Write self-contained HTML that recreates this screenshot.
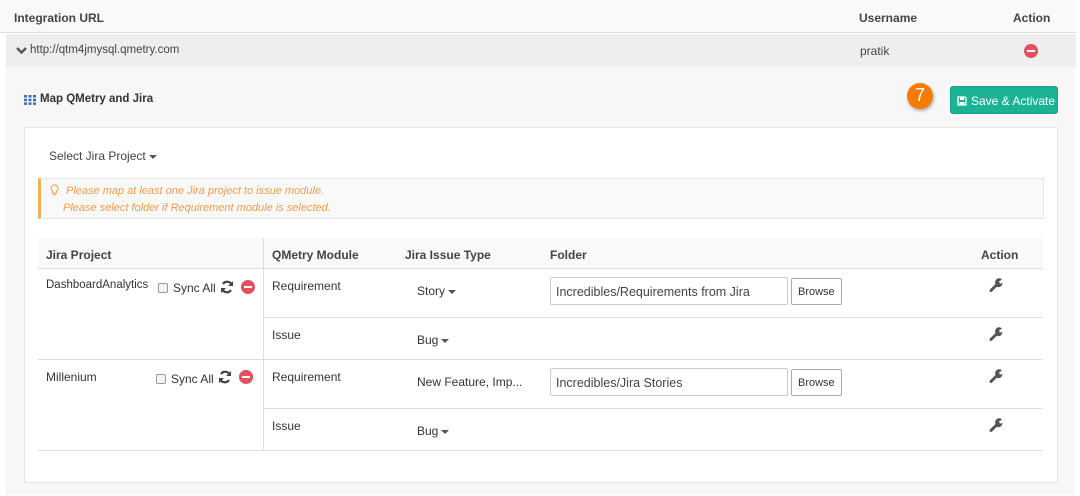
<!DOCTYPE html>
<html><head><style>
*{box-sizing:border-box;margin:0;padding:0}
body{width:1080px;height:496px;background:#fff;font-family:"Liberation Sans",sans-serif;font-size:12px;color:#333;position:relative;overflow:hidden}
.a{position:absolute;white-space:nowrap}
.b{font-weight:bold;color:#444}
.hl{position:absolute;height:1px;background:#ddd}
.inp{position:absolute;border:1px solid #ccc;border-radius:2px;background:#fff;height:28px;padding:7px 5px;font-size:12.5px;color:#444}
.btn{position:absolute;border:1px solid #aaa;border-radius:2px;background:#fff;height:27px;padding:7px 6px;font-size:11px;color:#333}
.caret{display:inline-block;border-left:4px solid transparent;border-right:4px solid transparent;border-top:4px solid #555;vertical-align:middle;margin-left:3px}
.cb{display:inline-block;width:10px;height:10px;border:1px solid #999;border-radius:2px;background:#f4f4f4;vertical-align:-1px;margin-right:5px}
.minus{position:absolute;width:14px;height:14px;border-radius:50%;background:#e4505d}
.minus:after{content:"";position:absolute;left:3px;top:6px;width:8px;height:2px;background:#fff}
</style></head><body>
<div class="a" style="left:0;top:0;width:1076px;height:33px;background:#f9f9f9;border-bottom:1px solid #ddd"></div>
<div class="a b" style="left:14px;top:11px">Integration URL</div>
<div class="a b" style="left:859px;top:11px">Username</div>
<div class="a b" style="left:1013px;top:11px">Action</div>
<div class="a" style="left:6px;top:34px;width:1070px;height:33px;background:#eee"></div>
<div class="a" style="left:16px;top:44px"><svg width="11" height="9" viewBox="0 0 11 9"><path d="M1 2 L5.5 6.5 L10 2" stroke="#555" stroke-width="2.4" fill="none"/></svg></div>
<div class="a" style="left:30px;top:44px;color:#444;font-size:11.5px">http://qtm4jmysql.qmetry.com</div>
<div class="a" style="left:860px;top:44px;color:#444">pratik</div>
<div class="minus" style="left:1024px;top:44px"></div>
<div class="a" style="left:6px;top:67px;width:1069px;height:428px;background:#f7f7f7"></div>
<div class="a" style="left:24px;top:94px"><svg width="12" height="10" viewBox="0 0 12 10"><g fill="#3a6fb0"><rect x="0" y="0" width="3" height="2.5"/><rect x="4.5" y="0" width="3" height="2.5"/><rect x="9" y="0" width="3" height="2.5"/><rect x="0" y="3.7" width="3" height="2.5"/><rect x="4.5" y="3.7" width="3" height="2.5"/><rect x="9" y="3.7" width="3" height="2.5"/><rect x="0" y="7.4" width="3" height="2.5"/><rect x="4.5" y="7.4" width="3" height="2.5"/><rect x="9" y="7.4" width="3" height="2.5"/></g></svg></div>
<div class="a b" style="left:40px;top:93px;color:#333;font-size:11.5px">Map QMetry and Jira</div>
<div class="a" style="left:907px;top:83px;width:26px;height:26px;border-radius:50%;background:#f57c00;box-shadow:1px 2px 3px rgba(0,0,0,.3);color:#fff;font-size:18px;text-align:center;line-height:25px">7</div>
<div class="a" style="left:950px;top:86px;width:108px;height:28px;background:#1cb394;border:1px solid #17a085;border-radius:3px;color:#fff;font-size:12px;padding:7px 0 0 6px"><svg width="10" height="10" viewBox="0 0 10 10" style="vertical-align:-1px;margin-right:4px"><path d="M1 1h7l1 1v7H1z" fill="none" stroke="#fff" stroke-width="1.3"/><rect x="3" y="1" width="4" height="3" fill="#fff"/><rect x="2.5" y="6" width="5" height="3" fill="#fff"/></svg>Save &amp; Activate</div>
<div class="a" style="left:24px;top:127px;width:1034px;height:356px;background:#fff;border:1px solid #e3e3e3"></div>
<div class="a" style="left:49px;top:149px;color:#444">Select Jira Project<span class="caret"></span></div>
<div class="a" style="left:38px;top:178px;width:1006px;height:41px;background:#f9f9f9;border:1px solid #e6e6e6;border-left:3px solid #f6ad5a"></div>
<div class="a" style="left:50px;top:184px"><svg width="9" height="12" viewBox="0 0 9 12"><path d="M4.5 1a3.3 3.3 0 0 0-2 6v2h4V7a3.3 3.3 0 0 0-2-6zM3 10.5h3" fill="none" stroke="#f6a04d" stroke-width="1"/></svg></div>
<div class="a" style="left:66px;top:185px;color:#f49a4b;font-style:italic;font-size:11px">Please map at least one Jira project to issue module.</div>
<div class="a" style="left:63px;top:202px;color:#f49a4b;font-style:italic;font-size:11px">Please select folder if Requirement module is selected.</div>
<div class="a" style="left:38px;top:238px;width:1005px;height:30px;background:#f9f9f9"></div>
<div class="a" style="left:263px;top:238px;width:1px;height:212px;background:#ddd"></div>
<div class="hl" style="left:38px;top:268px;width:1005px"></div>
<div class="hl" style="left:264px;top:317px;width:779px"></div>
<div class="hl" style="left:38px;top:359px;width:1005px"></div>
<div class="hl" style="left:264px;top:408px;width:779px"></div>
<div class="hl" style="left:38px;top:450px;width:1005px"></div>
<div class="a b" style="left:46px;top:248px">Jira Project</div>
<div class="a b" style="left:272px;top:248px">QMetry Module</div>
<div class="a b" style="left:405px;top:248px">Jira Issue Type</div>
<div class="a b" style="left:550px;top:248px">Folder</div>
<div class="a b" style="left:981px;top:248px">Action</div>
<div class="a" style="left:46px;top:279px;font-size:11.5px">DashboardAnalytics</div>
<div class="a" style="left:158px;top:281px"><span class="cb"></span>Sync All</div>
<svg class="a" style="left:220px;top:280px" width="14" height="14" viewBox="0 0 14 14"><path d="M12 5.5A5 5 0 0 0 3 4M2 8.5A5 5 0 0 0 11 10" fill="none" stroke="#444" stroke-width="2.2"/><path d="M13 1v5h-5zM1 13V8h5z" fill="#444"/></svg>
<div class="minus" style="left:241px;top:280px"></div>
<div class="a" style="left:272px;top:279px">Requirement</div>
<div class="a" style="left:417px;top:284px">Story<span class="caret"></span></div>
<div class="inp" style="left:550px;top:277px;width:238px">Incredibles/Requirements from Jira</div>
<div class="btn" style="left:791px;top:278px">Browse</div>
<div class="a" style="left:272px;top:328px">Issue</div>
<div class="a" style="left:417px;top:333px">Bug<span class="caret"></span></div>
<div class="a" style="left:46px;top:370px">Millenium</div>
<div class="a" style="left:156px;top:372px"><span class="cb"></span>Sync All</div>
<svg class="a" style="left:218px;top:370px" width="14" height="14" viewBox="0 0 14 14"><path d="M12 5.5A5 5 0 0 0 3 4M2 8.5A5 5 0 0 0 11 10" fill="none" stroke="#444" stroke-width="2.2"/><path d="M13 1v5h-5zM1 13V8h5z" fill="#444"/></svg>
<div class="minus" style="left:239px;top:370px"></div>
<div class="a" style="left:272px;top:370px">Requirement</div>
<div class="a" style="left:417px;top:375px">New Feature, Imp...</div>
<div class="inp" style="left:550px;top:368px;width:238px">Incredibles/Jira Stories</div>
<div class="btn" style="left:791px;top:369px">Browse</div>
<div class="a" style="left:272px;top:419px">Issue</div>
<div class="a" style="left:417px;top:424px">Bug<span class="caret"></span></div>
<svg class="a" style="left:989px;top:278px" width="14" height="14" viewBox="0 0 14 14"><path d="M2 12.5 L8 6.5" stroke="#555" stroke-width="3" stroke-linecap="round"/><path d="M6.5 6a4 4 0 0 1 6.5-4.5l-3 2 1 2.2 2.3-1a4 4 0 0 1-5.3 4.3z" fill="#555"/></svg>
<svg class="a" style="left:989px;top:327px" width="14" height="14" viewBox="0 0 14 14"><path d="M2 12.5 L8 6.5" stroke="#555" stroke-width="3" stroke-linecap="round"/><path d="M6.5 6a4 4 0 0 1 6.5-4.5l-3 2 1 2.2 2.3-1a4 4 0 0 1-5.3 4.3z" fill="#555"/></svg>
<svg class="a" style="left:989px;top:369px" width="14" height="14" viewBox="0 0 14 14"><path d="M2 12.5 L8 6.5" stroke="#555" stroke-width="3" stroke-linecap="round"/><path d="M6.5 6a4 4 0 0 1 6.5-4.5l-3 2 1 2.2 2.3-1a4 4 0 0 1-5.3 4.3z" fill="#555"/></svg>
<svg class="a" style="left:989px;top:418px" width="14" height="14" viewBox="0 0 14 14"><path d="M2 12.5 L8 6.5" stroke="#555" stroke-width="3" stroke-linecap="round"/><path d="M6.5 6a4 4 0 0 1 6.5-4.5l-3 2 1 2.2 2.3-1a4 4 0 0 1-5.3 4.3z" fill="#555"/></svg>
</body></html>
